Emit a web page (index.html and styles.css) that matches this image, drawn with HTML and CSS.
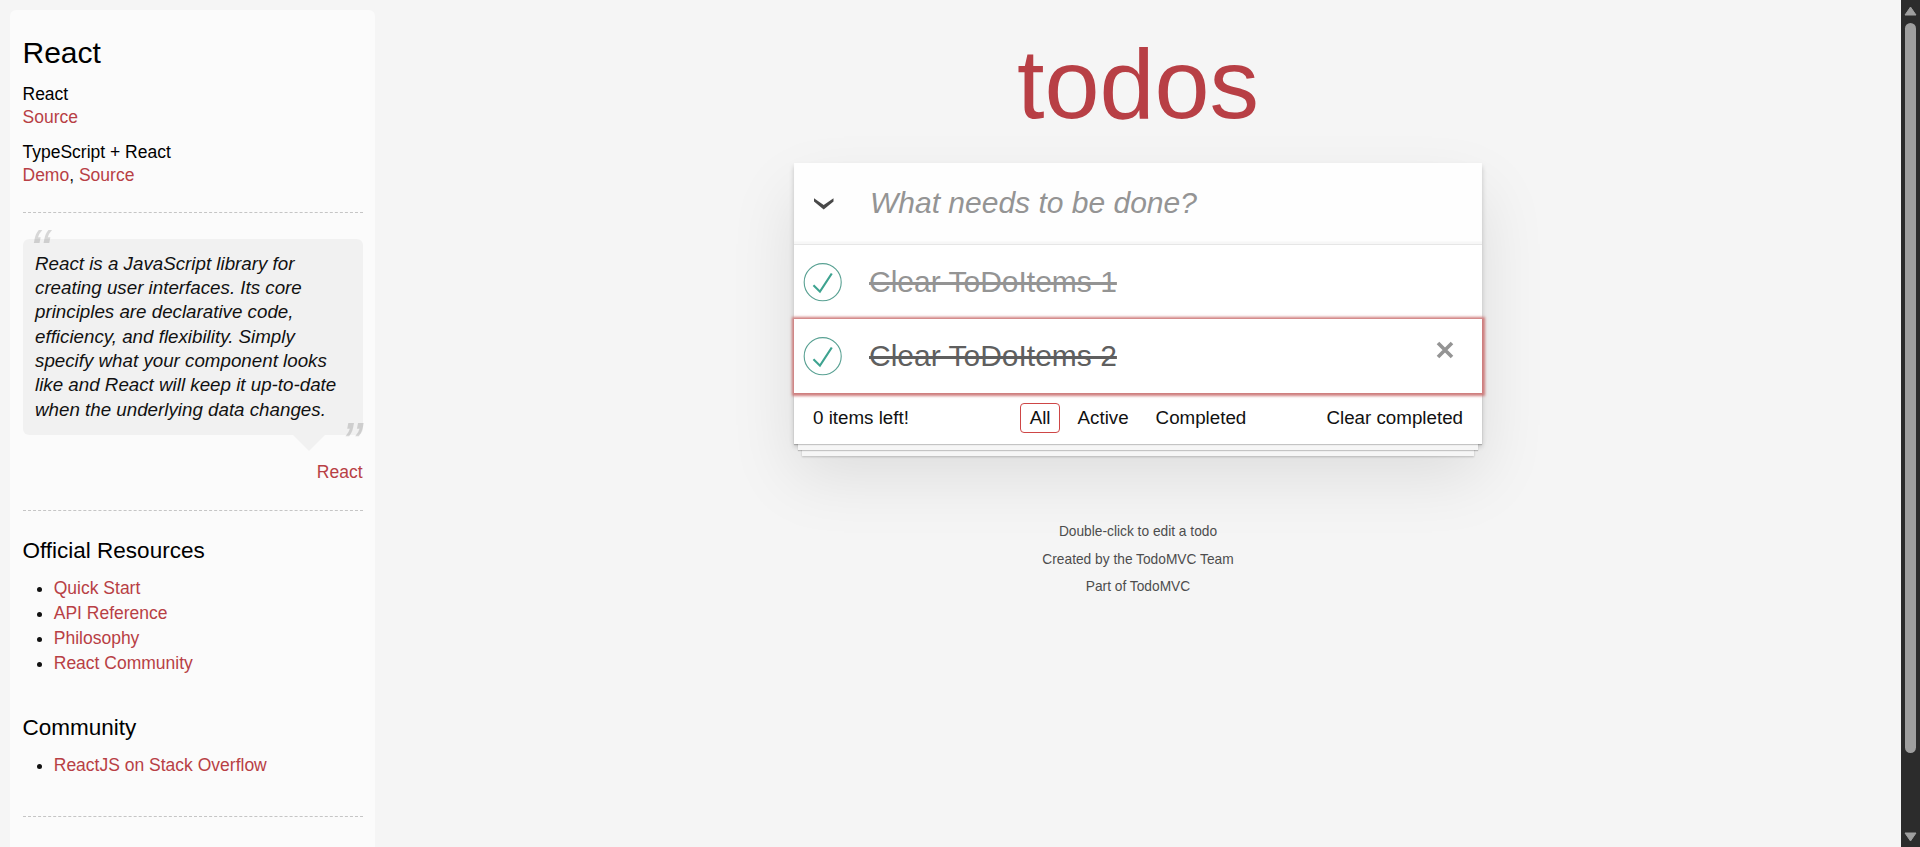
FILE: index.html
```html
<!DOCTYPE html>
<html lang="en">
<head>
<meta charset="utf-8">
<title>TodoMVC: React</title>
<link rel="stylesheet" href="styles.css">
</head>
<body>
<div class="window">
  <aside class="learn">
    <h3>React</h3>
    <h5>React</h5>
    <div class="source-links"><a>Source</a></div>
    <h5>TypeScript + React</h5>
    <div class="source-links"><a>Demo</a>, <a>Source</a></div>
    <hr>
    <blockquote class="quote">
      <p>React is a JavaScript library for creating user interfaces. Its core principles are declarative code, efficiency, and flexibility. Simply specify what your component looks like and React will keep it up-to-date when the underlying data changes.</p>
      <footer><a>React</a></footer>
    </blockquote>
    <hr>
    <h4>Official Resources</h4>
    <ul>
      <li><a>Quick Start</a></li>
      <li><a>API Reference</a></li>
      <li><a>Philosophy</a></li>
      <li><a>React Community</a></li>
    </ul>
    <h4>Community</h4>
    <ul>
      <li><a>ReactJS on Stack Overflow</a></li>
    </ul>
    <hr>
  </aside>

  <main class="content">
    <h1>todos</h1>
    <section class="todoapp">
      <header class="new-todo">
        <svg class="chevron" viewBox="0 0 22 14"><path d="M1 1.2 L10.7 8 L20.5 1.2 V4.6 L10.7 12.4 L1 4.6Z"/></svg>
        <span class="placeholder">What needs to be done?</span>
      </header>
      <ul class="todo-list">
        <li class="todo">
          <svg class="check" viewBox="-10 -18 100 135"><circle cx="50" cy="50" r="50"/><path d="M72 25L42 71 27 56l-4 4 20 20 34-52z"/></svg>
          <label>Clear ToDoItems 1</label>
        </li>
        <li class="todo focused">
          <svg class="check" viewBox="-10 -18 100 135"><circle cx="50" cy="50" r="50"/><path d="M72 25L42 71 27 56l-4 4 20 20 34-52z"/></svg>
          <label>Clear ToDoItems 2</label>
          <svg class="destroy" viewBox="0 0 18 18"><path d="M2 2L16 16M16 2L2 16"/></svg>
        </li>
      </ul>
      <footer class="footer">
        <span class="count">0 items left!</span>
        <nav class="filters"><a class="selected">All</a><a>Active</a><a>Completed</a></nav>
        <span class="clear">Clear completed</span>
      </footer>
    </section>
    <footer class="info">
      <p>Double-click to edit a todo</p>
      <p>Created by the TodoMVC Team</p>
      <p>Part of TodoMVC</p>
    </footer>
  </main>

  <div class="scrollbar">
    <svg class="arrow" viewBox="0 0 13 10"><path d="M6.5 1L12 9H1Z"/></svg>
    <div class="thumb"></div>
    <svg class="arrow" viewBox="0 0 13 10"><path d="M6.5 9L12 1H1Z"/></svg>
  </div>
</div>
</body>
</html>
```

FILE: styles.css
```css
* { box-sizing: border-box; }

body {
  margin: 0;
  background: #f5f5f5;
  color: #111;
  font: 17.5px/24.5px "Liberation Sans", Arial, sans-serif;
}

.window {
  display: flex;
  height: 847px;
  overflow: hidden;
}

/* Sidebar */
.learn {
  flex: none;
  width: 365px;
  height: 900px;
  margin: 10px 0 0 10px;
  padding: 12.5px;
  border-radius: 6px;
  background: rgba(255, 255, 255, .6);
}

.learn a { color: #b83f45; }

.learn h3,
.learn h4,
.learn h5 {
  margin: 12.5px 0;
  color: #000;
  font-weight: 400;
  line-height: 1.2;
}

.learn h3 { font-size: 30px; }
.learn h4 { font-size: 22.5px; }
.learn h5 { margin-bottom: 0; font-size: 17.5px; }

.learn hr {
  margin: 25px 0;
  border: 0;
  border-top: 1px dashed #c5c5c5;
}

.learn hr + h4 { margin-top: 26px; }

.learn ul {
  margin: 0 0 37.5px;
  padding-left: 31.25px;
}

.learn li { line-height: 25px; }

.quote {
  position: relative;
  margin: 26px 0 75px;
  padding: 12.5px;
  border-radius: 6px;
  background: rgba(0, 0, 0, .04);
}

.quote p {
  margin: 0;
  font-size: 18.75px;
  font-style: italic;
  line-height: 24.375px;
}

.quote p::before,
.quote p::after {
  position: absolute;
  font-size: 60px;
  line-height: 81.25px;
  opacity: .15;
}

.quote p::before { content: "“"; top: -29px; left: 7px; }
.quote p::after { content: "”"; right: 1px; bottom: -50px; }

.quote::after {
  content: "";
  position: absolute;
  top: 100%;
  right: 37.5px;
  border: 16.25px solid transparent;
  border-bottom-width: 0;
  border-top-color: rgba(0, 0, 0, .04);
}

.quote footer {
  position: absolute;
  right: 0;
  bottom: -50px;
}

/* App */
.content {
  flex: 1;
  display: flex;
  flex-direction: column;
  align-items: center;
}

.content h1 {
  height: 163px;
  margin: 0;
  padding-top: 28px;
  color: #b83f45;
  font-size: 99px;
  font-weight: 400;
  line-height: 112px;
}

.todoapp {
  width: 688px;
  background: #fff;
  box-shadow: 0 2.5px 5px rgba(0, 0, 0, .2), 0 31.25px 62.5px rgba(0, 0, 0, .1);
}

.new-todo {
  display: flex;
  align-items: center;
  height: 81px;
  padding-left: 19px;
  background: rgba(0, 0, 0, .003);
  box-shadow: inset 0 -2.5px 1.25px rgba(0, 0, 0, .03);
}

.chevron {
  width: 22px;
  height: 14px;
  margin-right: 35px;
  fill: #484848;
}

.placeholder {
  padding-bottom: 2px;
  color: #949494;
  font-size: 30px;
  font-style: italic;
  line-height: 42px;
}

.todo-list {
  margin: 0;
  padding: 0;
  border-top: 1px solid #e6e6e6;
  list-style: none;
}

.todo {
  display: flex;
  align-items: center;
  height: 74px;
}

.check {
  width: 50px;
  height: 50px;
  margin-right: 25px;
  overflow: visible;
}

.check circle { fill: none; stroke: #59a193; stroke-width: 3; }
.check path { fill: #3ea390; }

.todo label {
  flex: 1;
  color: #949494;
  font-size: 30px;
  line-height: 36px;
  text-decoration: line-through;
}

.focused {
  position: relative;
  box-shadow: 0 0 2.5px 2.5px #cf7d7d;
}

.focused label { color: #5f5f5f; }

.destroy {
  width: 18px;
  height: 18px;
  margin: 0 28.5px 12px 0;
  fill: none;
  stroke: #949494;
  stroke-width: 3.6;
}

.footer {
  position: relative;
  display: flex;
  justify-content: space-between;
  height: 51px;
  padding: 12px 19px 0;
  font-size: 18.75px;
  line-height: 26px;
  box-shadow:
    0 1px 1px rgba(0, 0, 0, .2),
    0 10px 0 -4px #f6f6f6,
    0 11px 1px -4px rgba(0, 0, 0, .2),
    0 20px 0 -8px #f6f6f6,
    0 21px 2px -8px rgba(0, 0, 0, .2);
}

.filters {
  position: absolute;
  inset: 10px 0 auto;
  display: flex;
  justify-content: center;
  gap: 7.5px;
}

.filters a {
  height: 30px;
  padding: 1px 8.75px 0;
  border: 1px solid transparent;
  border-radius: 4px;
}

.filters .selected { border-color: #ce4646; }

.info {
  margin-top: 81px;
  color: #4d4d4d;
  font-size: 13.75px;
  line-height: 13.75px;
  text-align: center;
}

.info p { margin: 0 0 13.75px; }

/* Scrollbar */
.scrollbar {
  display: flex;
  flex-direction: column;
  align-items: center;
  width: 19px;
  padding: 6px 0 5px;
  background: #2c2c2c;
}

.arrow {
  width: 13px;
  height: 10px;
  fill: #9f9f9f;
  stroke: #9f9f9f;
  stroke-linejoin: round;
}

.thumb {
  width: 11px;
  height: 730px;
  margin: 7px 0 auto;
  border-radius: 6px;
  background: #9f9f9f;
}
```
